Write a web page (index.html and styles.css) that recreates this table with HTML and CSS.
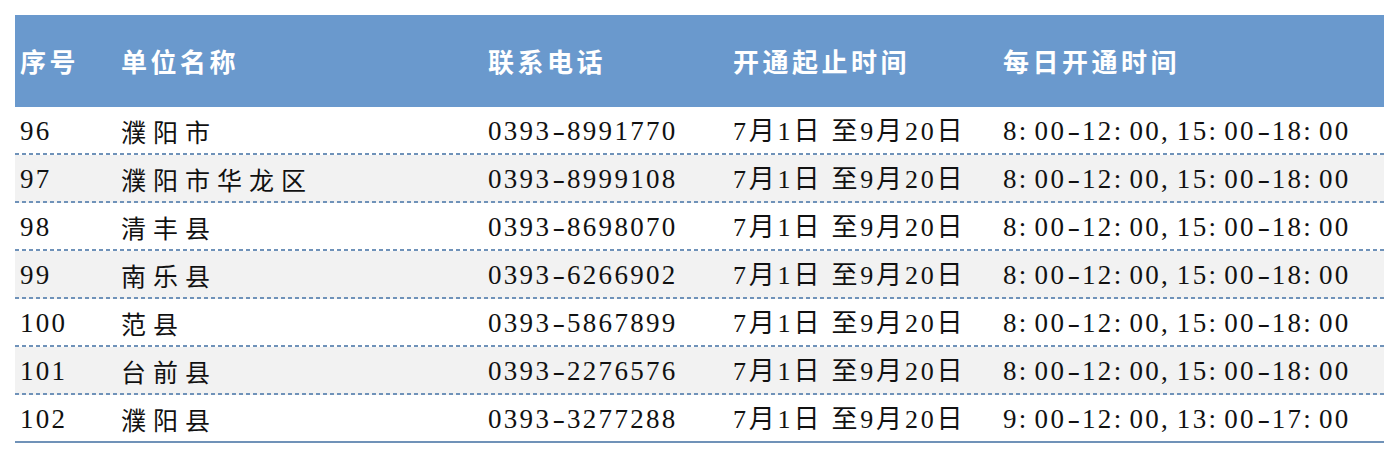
FILE: index.html
```html
<!DOCTYPE html>
<html lang="zh-CN">
<head>
<meta charset="utf-8">
<title>开通时间表</title>
<link rel="stylesheet" href="styles.css">
</head>
<body>
<div class="table">
  <div class="row head">
    <div class="c1">序号</div>
    <div class="c2">单位名称</div>
    <div class="c3">联系电话</div>
    <div class="c4">开通起止时间</div>
    <div class="c5">每日开通时间</div>
  </div>
  <div class="row">
    <div class="c1 num">96</div>
    <div class="c2 name">濮阳市</div>
    <div class="c3 num">0393<span class="h">-</span>8991770</div>
    <div class="c4 num">7月1日 至9月20日</div>
    <div class="c5 num">8<span class="p">:</span>00<span class="h">-</span>12<span class="p">:</span>00<span class="p">,</span>15<span class="p">:</span>00<span class="h">-</span>18<span class="p">:</span>00</div>
  </div>
  <div class="row alt">
    <div class="c1 num">97</div>
    <div class="c2 name">濮阳市华龙区</div>
    <div class="c3 num">0393<span class="h">-</span>8999108</div>
    <div class="c4 num">7月1日 至9月20日</div>
    <div class="c5 num">8<span class="p">:</span>00<span class="h">-</span>12<span class="p">:</span>00<span class="p">,</span>15<span class="p">:</span>00<span class="h">-</span>18<span class="p">:</span>00</div>
  </div>
  <div class="row">
    <div class="c1 num">98</div>
    <div class="c2 name">清丰县</div>
    <div class="c3 num">0393<span class="h">-</span>8698070</div>
    <div class="c4 num">7月1日 至9月20日</div>
    <div class="c5 num">8<span class="p">:</span>00<span class="h">-</span>12<span class="p">:</span>00<span class="p">,</span>15<span class="p">:</span>00<span class="h">-</span>18<span class="p">:</span>00</div>
  </div>
  <div class="row alt">
    <div class="c1 num">99</div>
    <div class="c2 name">南乐县</div>
    <div class="c3 num">0393<span class="h">-</span>6266902</div>
    <div class="c4 num">7月1日 至9月20日</div>
    <div class="c5 num">8<span class="p">:</span>00<span class="h">-</span>12<span class="p">:</span>00<span class="p">,</span>15<span class="p">:</span>00<span class="h">-</span>18<span class="p">:</span>00</div>
  </div>
  <div class="row">
    <div class="c1 num">100</div>
    <div class="c2 name">范县</div>
    <div class="c3 num">0393<span class="h">-</span>5867899</div>
    <div class="c4 num">7月1日 至9月20日</div>
    <div class="c5 num">8<span class="p">:</span>00<span class="h">-</span>12<span class="p">:</span>00<span class="p">,</span>15<span class="p">:</span>00<span class="h">-</span>18<span class="p">:</span>00</div>
  </div>
  <div class="row alt">
    <div class="c1 num">101</div>
    <div class="c2 name">台前县</div>
    <div class="c3 num">0393<span class="h">-</span>2276576</div>
    <div class="c4 num">7月1日 至9月20日</div>
    <div class="c5 num">8<span class="p">:</span>00<span class="h">-</span>12<span class="p">:</span>00<span class="p">,</span>15<span class="p">:</span>00<span class="h">-</span>18<span class="p">:</span>00</div>
  </div>
  <div class="row last">
    <div class="c1 num">102</div>
    <div class="c2 name">濮阳县</div>
    <div class="c3 num">0393<span class="h">-</span>3277288</div>
    <div class="c4 num">7月1日 至9月20日</div>
    <div class="c5 num">9<span class="p">:</span>00<span class="h">-</span>12<span class="p">:</span>00<span class="p">,</span>13<span class="p">:</span>00<span class="h">-</span>17<span class="p">:</span>00</div>
  </div>
</div>
</body>
</html>
```
FILE: styles.css
```css
html, body {
  margin: 0;
  padding: 0;
  background: #ffffff;
}
body {
  padding: 15px 0 0 15px;
}
.table {
  width: 1369px;
}
.row {
  display: grid;
  grid-template-columns: 106px 367px 245px 270px 381px;
  align-items: center;
  height: 48px;
  box-sizing: border-box;
  padding-bottom: 2px;
  background-color: #ffffff;
  background-image: repeating-linear-gradient(to right, #6f92b9 0 4px, transparent 4px 7px);
  background-size: 100% 2px;
  background-position: left bottom;
  background-repeat: no-repeat;
  color: #111111;
  white-space: nowrap;
}
.row.alt {
  background-color: #f2f2f2;
}
.row.last {
  background-image: none;
  border-bottom: 2px solid #7092b8;
  padding-bottom: 0;
}
.row.head {
  height: 92px;
  padding-bottom: 0;
  background: #6a99cd;
  color: #ffffff;
  font-family: "Noto Sans CJK SC", "Noto Sans", sans-serif;
  font-weight: 700;
  font-size: 26px;
  letter-spacing: 3.5px;
  line-height: 1;
}
.c1 {
  padding-left: 5px;
}
.num {
  font-family: "Liberation Serif", "Noto Sans CJK SC", serif;
  font-size: 27px;
  letter-spacing: 2.3px;
  line-height: 1;
  padding-top: 3px;
}
.c4.num {
  font-size: 26px;
  letter-spacing: 2.8px;
}
.name {
  font-family: "Noto Sans CJK SC", sans-serif;
  font-size: 25px;
  font-weight: 400;
  letter-spacing: 7px;
  line-height: 1;
  padding-top: 2px;
}
.p {
  display: inline-block;
  width: 15.8px;
  text-align: left;
  letter-spacing: 0;
}
.h {
  display: inline-block;
  width: 15.8px;
  text-align: center;
  letter-spacing: 0;
  transform: scaleX(1.4);
}
```
